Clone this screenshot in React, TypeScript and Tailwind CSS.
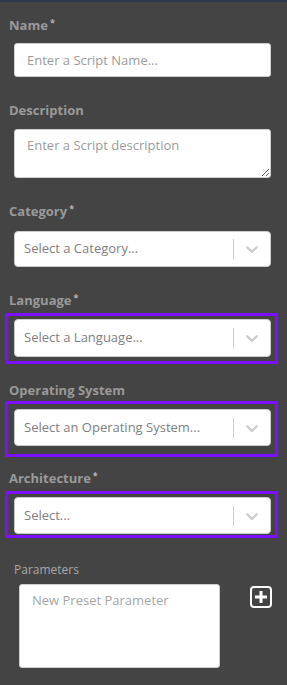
import React from "react";

const font = { fontFamily: '"Open Sans", "Noto Sans", sans-serif' };

function Label({ text, required, className = "" }: { text: string; required?: boolean; className?: string }) {
  return (
    <div className={`pl-[9px] text-[13px] leading-[18px] font-bold text-[#9a9a9a] ${className}`}>
      {text}
      {required && <sup className="ml-[2px] text-[9px] font-bold text-[#b5b5b5]">*</sup>}
    </div>
  );
}

function Chevron() {
  return (
    <svg width="20" height="20" viewBox="0 0 20 20" fill="#cccccc">
      <path d="M4.516 7.548c0.436-0.446 1.043-0.481 1.576 0l3.908 3.747 3.908-3.747c0.533-0.481 1.141-0.446 1.574 0 0.436 0.445 0.408 1.197 0 1.615-0.406 0.418-4.695 4.502-4.695 4.502-0.217 0.223-0.502 0.335-0.787 0.335s-0.57-0.112-0.789-0.335c0 0-4.287-4.084-4.695-4.502s-0.436-1.17 0-1.615z" />
    </svg>
  );
}

function Select({ placeholder, h = "h-[36px]" }: { placeholder: string; h?: string }) {
  return (
    <div className={`flex w-[257px] ${h} items-center rounded-[4px] border border-[#cccccc] bg-white`}>
      <div className="flex-1 truncate px-[9px] text-[13px] text-[#808080]">{placeholder}</div>
      <div className="h-[20px] w-px bg-[#cccccc]" />
      <div className="flex w-[36px] items-center justify-center">
        <Chevron />
      </div>
    </div>
  );
}

function Outlined({ children, className = "" }: { children: React.ReactNode; className?: string }) {
  return (
    <div className={`ml-[5px] w-[273px] border-[3px] border-[#7a10ff] pl-[6px] pr-[4px] ${className}`}>{children}</div>
  );
}

export default function App() {
  return (
    <div className="min-h-[685px] w-[287px] border-t-2 border-[#2d3a4c] bg-[#444444]" style={font}>
      <Label text="Name" required className="pt-[14px]" />
      <input
        className="mt-[9px] ml-[14px] block h-[34px] w-[257px] rounded-[3px] border border-[#cfcfcf] bg-white px-[12px] text-[13px] text-[#555] placeholder:text-[#9b9b9b] outline-none"
        placeholder="Enter a Script Name..."
      />

      <Label text="Description" className="mt-[24px]" />
      <textarea
        className="mt-[10px] ml-[14px] block h-[49px] w-[257px] rounded-[3px] border border-[#cfcfcf] bg-white px-[12px] py-[6px] text-[13px] leading-[18px] placeholder:text-[#9b9b9b] outline-none"
        placeholder="Enter a Script description"
      />

      <Label text="Category" required className="mt-[24px]" />
      <div className="mt-[11px] ml-[14px]">
        <Select placeholder="Select a Category..." />
      </div>

      <Label text="Language" required className="mt-[24px]" />
      <Outlined className="mt-[4px] pt-[3px] pb-[4px]">
        <Select placeholder="Select a Language..." h="h-[38px]" />
      </Outlined>

      <Label text="Operating System" className="mt-[17px]" />
      <Outlined className="mt-[2px] pt-[5px] pb-[8px]">
        <Select placeholder="Select an Operating System..." h="h-[37px]" />
      </Outlined>

      <Label text="Architecture" required className="mt-[12px]" />
      <Outlined className="mt-[4px] pt-[3px] pb-[1px]">
        <Select placeholder="Select..." h="h-[37px]" />
      </Outlined>

      <div className="mt-[24px] pl-[14px] text-[12px] leading-[16px] text-[#a8a8a8]">Parameters</div>
      <div className="mt-[6px] flex items-start">
        <textarea
          className="ml-[19px] block h-[84px] w-[201px] resize-none rounded-[3px] border border-[#cfcfcf] bg-white px-[12px] py-[6px] text-[13px] leading-[18px] placeholder:text-[#a5a5a5] outline-none"
          placeholder="New Preset Parameter"
        />
        <button className="ml-[30px] mt-[2px] block">
          <svg width="22" height="22" viewBox="0 0 22 22" fill="none">
            <rect x="1" y="1" width="20" height="20" rx="3" stroke="white" strokeWidth="2" />
            <path d="M11 5v12M5 11h12" stroke="white" strokeWidth="3" />
          </svg>
        </button>
      </div>
    </div>
  );
}
